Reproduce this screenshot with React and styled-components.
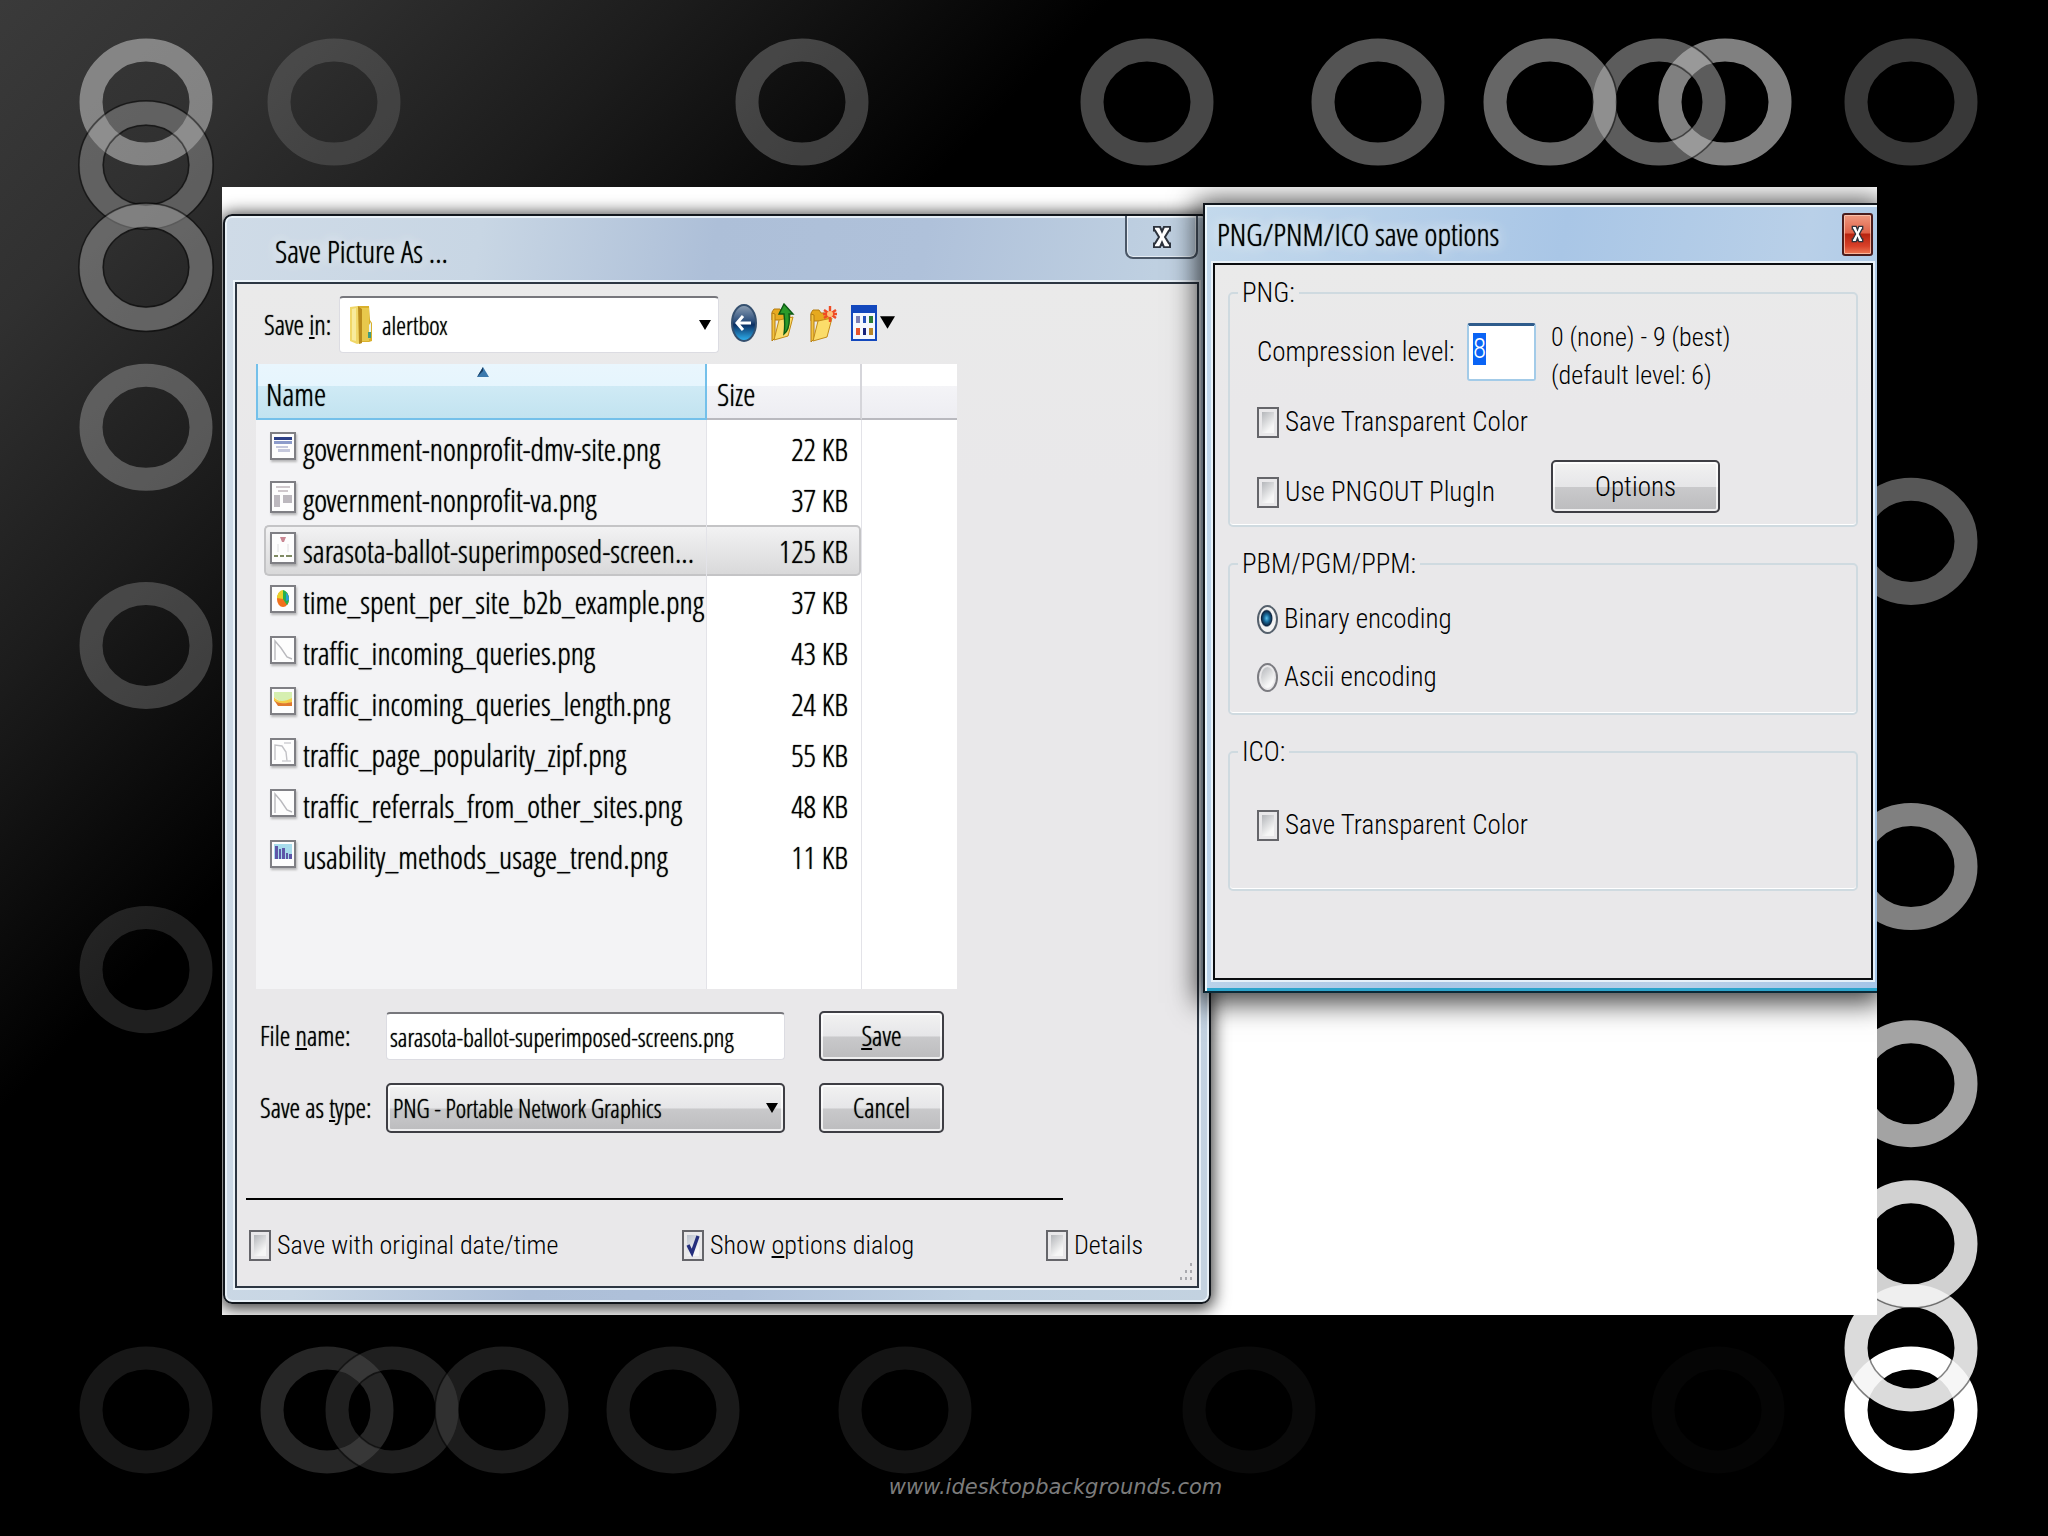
import React, { useEffect, useRef } from 'react';
import styled, { createGlobalStyle, css } from 'styled-components';

const segoe = '"Open Sans Condensed Light", "Roboto Condensed", "Open Sans", sans-serif';
const msSans = '"Roboto Condensed", Roboto, "Liberation Sans", sans-serif';

const GlobalStyle = createGlobalStyle`
    * {
        box-sizing: border-box;
    }
    body {
        margin: 0;
        background-color: #000;
    }
    button, input, select {
        font: inherit;
        color: inherit;
        text-shadow: inherit;
        margin: 0;
    }
`;

const Desktop = styled.div`
    position: relative;
    min-height: 100vh;
    padding: 187px 171px 0 222px;
    background: linear-gradient(135deg, #3a3a3a 0%, #303030 9%, #1c1c1c 19%, #000 31%);
    color: #000;
`;
const RingLayer = styled.svg`
    position: absolute;
    top: 0;
    left: 0;
    width: 100%;
    height: 100%;
`;
const Stage = styled.main`
    position: relative;
    display: flex;
    align-items: flex-start;
    padding: 27px 0 11px 1px;
    background-color: #fff;
    overflow: hidden;
`;
const Credit = styled.footer`
    position: relative;
    height: 222px;
    padding: 158px 0 0 12px;
    text-align: center;
    font-family: "DejaVu Sans", sans-serif;
    font-style: italic;
    font-size: 21px;
    line-height: 28px;
    color: #7c7c7c;
`;

const Window = styled.section`
    min-width: 0;
    border: 2px solid #11161c;
    ${(props) =>
        props.$front
            ? css`
                flex: 674 674 674px;
                margin: -11px 0 0 -8px;
                padding: 0 4px 11px 8px;
                border-right: 0;
                border-bottom-color: #0a2a38;
                background: linear-gradient(100deg, #c3d9ec 0%, #a9c6e6 45%, #b9d0e8 75%, #a4c5e8 100%);
                box-shadow: inset 2px 2px 0 #eef7fc, inset 0 -3px 0 #2ba3cb, 0 4px 26px 6px rgba(0, 0, 0, 0.75);
                z-index: 1;
            `
            : css`
                flex: 988 988 988px;
                padding: 0 10px 14px;
                border-radius: 9px;
                background: linear-gradient(100deg, #cfdbe7 0%, #c8d6e4 22%, #adbfd8 42%, #afc1da 60%, #bfd0e1 80%, #c3d2e0 100%);
                box-shadow: inset 0 0 0 2px rgba(240, 247, 252, 0.8), 0 2px 16px 3px rgba(0, 0, 0, 0.75);
            `};
`;
const TitleBar = styled.header`
    display: flex;
    justify-content: space-between;
    align-items: ${(props) => (props.$front ? 'center' : 'flex-start')};
    height: ${(props) => (props.$front ? '58px' : '66px')};
    padding-left: ${(props) => (props.$front ? '4px' : '40px')};
`;
const Title = styled.h1`
    margin: 0;
    font-family: ${segoe};
    font-size: 31px;
    font-weight: 400;
    line-height: ${(props) => (props.$front ? '60px' : '70px')};
    text-shadow: 0 0 1px #000, 0 0 12px #fff, 0 0 20px rgba(255, 255, 255, 0.8);
    white-space: nowrap;
`;
const CloseTab = styled.button`
    display: flex;
    align-items: center;
    justify-content: center;
    width: 73px;
    height: 43px;
    margin-right: 1px;
    padding: 0;
    border: 2px solid #4a5767;
    border-top: 0;
    border-radius: 0 0 8px 8px;
    background: transparent;
    box-shadow: inset 0 0 0 1px rgba(255, 255, 255, 0.6);
`;
const CloseRed = styled.button`
    display: flex;
    align-items: center;
    justify-content: center;
    width: 31px;
    height: 43px;
    padding: 0;
    border: 2px solid #4a1c1c;
    border-radius: 3px;
    background: linear-gradient(#ef9a80 0%, #e0634a 45%, #b82410 50%, #d8412a 80%, #ee7a55 100%);
    box-shadow: inset 0 0 0 1px rgba(255, 210, 190, 0.7);
`;
const Client = styled.div`
    position: relative;
    border: 2px solid ${(props) => (props.$front ? '#0b0d10' : '#2c3642')};
    background: linear-gradient(#eaeaea 0%, #e9e8ea 20%, #e9e8ea 100%);
    box-shadow: 0 0 0 2px rgba(240, 247, 252, 0.85);
    line-height: 36px;
    ${(props) =>
        props.$front
            ? css`
                min-height: 717px;
                padding: 0 13px;
                font-family: ${msSans};
                font-size: 27px;
                font-weight: 300;
            `
            : css`
                font-family: ${segoe};
                font-size: 27px;
                text-shadow: 0 0 1px #000;
            `};
`;

const LookIn = styled.div`
    display: flex;
    align-items: center;
    padding: 12px 0 11px 27px;
`;
const LookInLabel = styled.label`
    width: 75px;
`;
const Combo = styled.div`
    position: relative;
    width: ${(props) => (props.$raised ? '100%' : '380px')};
    svg {
        position: absolute;
        top: 50%;
        transform: translateY(-50%);
        pointer-events: none;
    }
    svg:last-child {
        right: ${(props) => (props.$raised ? '7px' : '8px')};
    }
    svg:first-child:not(:last-child) {
        left: 10px;
    }
`;
const raisedFace = css`
    border: 2px solid #3e3e44;
    border-radius: 5px;
    background: linear-gradient(#f2f2f2 0%, #e6e6e8 50%, #c9c9cb 52%, #bcbcbe 100%);
    box-shadow: inset 0 0 0 2px rgba(255, 255, 255, 0.75);
`;
const Select = styled.select`
    display: block;
    width: 100%;
    appearance: none;
    font-size: 25px;
    ${(props) =>
        props.$raised
            ? css`
                height: 50px;
                padding: 0 28px 0 5px;
                ${raisedFace}
            `
            : css`
                height: 57px;
                padding: 0 28px 0 42px;
                border: 1px solid #dcdce2;
                border-top: 2px solid #77777c;
                border-radius: 4px;
                background-color: #fff;
            `};
`;
const Tools = styled.div`
    display: flex;
    align-items: center;
    column-gap: 14px;
    margin-left: 12px;
    padding-bottom: 4px;
`;
const ToolButton = styled.button`
    display: flex;
    align-items: center;
    column-gap: 3px;
    padding: 0;
    border: 0;
    background: none;
`;

const FileTable = styled.table`
    width: 701px;
    margin-left: 19px;
    table-layout: fixed;
    border-collapse: separate;
    border-spacing: 0;
    background-color: #fff;
    font-size: 31px;
    th {
        position: relative;
        height: 56px;
        padding: 6px 10px 0;
        font-weight: 400;
        text-align: left;
        background: linear-gradient(#fff 0%, #fff 40%, #f4f4f7 41%, #ededf2 100%);
        border-right: 2px solid #d5d5da;
        border-bottom: 2px solid #b9b9bf;
    }
    th:first-child {
        padding-left: 8px;
        background: linear-gradient(#e9f6fd 0%, #e6f5fd 40%, #cfeaf5 41%, #c2e3f0 100%);
        border: 2px solid #74c0ea;
        border-top: 0;
    }
    th:last-child {
        border-right: 0;
    }
    td {
        height: 51px;
        padding: 0;
        border-right: 1px solid #e3e3e8;
    }
    td:first-child {
        padding-left: 8px;
        background-color: #f3f3f5;
    }
    td:last-child {
        border-right: 0;
    }
`;
const SortMark = styled.svg`
    position: absolute;
    top: 3px;
    left: 49%;
`;
const Spacer = styled.tr`
    td {
        height: ${(props) => (props.$tail ? '107px' : '3px')};
    }
`;
const Cell = styled.div`
    display: flex;
    align-items: center;
    height: 51px;
    padding-left: 6px;
    column-gap: 7px;
    white-space: nowrap;
    ${(props) =>
        props.$size &&
        css`
            justify-content: flex-end;
            padding: 0 13px 0 0;
        `};
    ${(props) =>
        props.$selected &&
        css`
            background: linear-gradient(#f2f2f3, #d9d9da);
            border-top: 2px solid #c4c4c6;
            border-bottom: 2px solid #c4c4c6;
            border-${props.$size ? 'right' : 'left'}: 2px solid #c4c4c6;
            border-radius: ${props.$size ? '0 5px 5px 0' : '5px 0 0 5px'};
            padding-${props.$size ? 'right: 11px' : 'left: 4px'};
        `};
`;
const Thumb = styled.svg`
    flex: none;
    filter: drop-shadow(1px 2px 1px rgba(0, 0, 0, 0.25));
    margin-bottom: 6px;
`;

const FileForm = styled.div`
    display: grid;
    grid-template-columns: 126px minmax(0, 399px) 125px;
    align-items: center;
    row-gap: 22px;
    margin: 22px 0 65px;
    padding-left: 23px;
    button {
        margin-left: 34px;
        width: 125px;
    }
`;
const TextBox = styled.input`
    width: 100%;
    height: 48px;
    padding: 0 3px;
    border: 1px solid #dcdce2;
    border-top: 2px solid #77777c;
    border-radius: 4px;
    background-color: #fff;
    font-size: 25px;
`;
const Button = styled.button`
    height: 50px;
    padding: 0;
    ${raisedFace}
`;
const Rule = styled.hr`
    width: 817px;
    margin: 0 0 0 9px;
    border: 0;
    border-top: 2px solid #000;
`;
const FooterChecks = styled.div`
    display: grid;
    grid-template-columns: 433fr 364fr 151fr;
    padding: 27px 0 23px 12px;
    font-family: ${msSans};
    font-size: 26px;
    font-weight: 300;
    text-shadow: none;
`;
const Grip = styled.svg`
    position: absolute;
    right: 4px;
    bottom: 4px;
`;

const Choice = styled.label`
    display: flex;
    align-items: center;
    column-gap: 6px;
    height: 36px;
    white-space: nowrap;
`;
const CheckBox = styled.input`
    appearance: none;
    flex: none;
    width: 22px;
    height: 31px;
    border: 2px solid #65656a;
    background: linear-gradient(135deg, #b4b6ba, #f6f6f6 75%) content-box #f4f4f4;
    padding: 3px;
    &:checked {
        background:
            url("data:image/svg+xml,%3Csvg xmlns='http://www.w3.org/2000/svg' viewBox='0 0 18 27' preserveAspectRatio='none'%3E%3Cpath d='M4 13l4 8 6-17' fill='none' stroke='%23252f7d' stroke-width='3.4'/%3E%3C/svg%3E") center / 100% 100% no-repeat,
            linear-gradient(135deg, #b9c0cc, #f6f6f6 75%) content-box #f4f4f4;
    }
`;
const Radio = styled.input`
    appearance: none;
    flex: none;
    width: 21px;
    height: 29px;
    border: 2px solid #7b7b80;
    border-radius: 50%;
    background: linear-gradient(135deg, #b4b6ba, #f8f8f8 75%) content-box #f2f2f2;
    padding: 2px;
    &:checked {
        border-color: #55606c;
        background: radial-gradient(ellipse 7px 10px at 45% 45%, #5cc0ea 0%, #1b6f9f 35%, #0c2440 75%, #f2f2f2 90%);
    }
`;
const Group = styled.fieldset`
    min-width: 0;
    margin: ${(props) => props.$top} 0 0;
    padding: 0 13px ${(props) => props.$bottom} 27px;
    border: 2px solid #cfdae0;
    border-radius: 5px;
    box-shadow: inset 0 -1px 0 #fff;
    legend {
        margin-left: -19px;
        padding: 0 4px;
        line-height: 34px;
    }
`;
const LevelRow = styled.div`
    display: flex;
    align-items: center;
    height: 76px;
    margin: 4px 0 14px;
    line-height: 38px;
    label {
        width: 210px;
    }
    p {
        margin: 0;
        padding-top: 8px;
        font-size: 26px;
    }
`;
const LevelBox = styled.input`
    width: 69px;
    height: 58px;
    margin-right: 15px;
    padding: 0 4px 8px;
    border: 2px solid #a3cbe8;
    border-top: 3px solid #2f5c8c;
    border-radius: 3px;
    background-color: #fff;
    outline: 0;
    &::selection {
        background-color: #0a64f5;
        color: #fff;
    }
`;
const PluginRow = styled.div`
    display: flex;
    align-items: flex-end;
    margin-top: 20px;
    label {
        width: 294px;
        height: 42px;
    }
    button {
        width: 169px;
        height: 53px;
    }
`;
const Stack = styled.div`
    display: flex;
    flex-direction: column;
    row-gap: 22px;
    padding-top: ${(props) => props.$top};
`;

// [cx, cy, opacity, outlined]
const rings = [
    [146, 102, 0.4], [146, 165, 0.28, true], [146, 267, 0.31, true], [146, 427, 0.26], [146, 645, 0.2],
    [146, 969, 0.12], [146, 1409, 0.09],
    [334, 102, 0.13], [802, 102, 0.22], [1147, 102, 0.28], [1378, 102, 0.33], [1725, 102, 0.5],
    [1659, 102, 0.36, true], [1550, 102, 0.4, true], [1911, 102, 0.22],
    [1911, 541, 0.34], [1911, 866, 0.5], [1911, 1083, 0.64], [1911, 1409, 1], [1911, 1347, 0.86, true],
    [1911, 1243, 0.82, true],
    [327, 1409, 0.15], [392, 1409, 0.12, true], [502, 1409, 0.11, true], [673, 1409, 0.1], [905, 1409, 0.08],
    [1249, 1409, 0.04], [1718, 1409, 0.02],
];

const files = [
    { name: 'government-nonprofit-dmv-site.png', size: '22 KB', thumb: 'page' },
    { name: 'government-nonprofit-va.png', size: '37 KB', thumb: 'columns', tall: true },
    { name: 'sarasota-ballot-superimposed-screen...', size: '125 KB', thumb: 'ballot', tall: true, selected: true },
    { name: 'time_spent_per_site_b2b_example.png', size: '37 KB', thumb: 'pie' },
    { name: 'traffic_incoming_queries.png', size: '43 KB', thumb: 'curve' },
    { name: 'traffic_incoming_queries_length.png', size: '24 KB', thumb: 'area' },
    { name: 'traffic_page_popularity_zipf.png', size: '55 KB', thumb: 'zipf' },
    { name: 'traffic_referrals_from_other_sites.png', size: '48 KB', thumb: 'curve' },
    { name: 'usability_methods_usage_trend.png', size: '11 KB', thumb: 'bars' },
];

const thumbs = {
    page: (
        <>
            <path d="M4 5h18v3H4z" fill="#2c3f86" />
            <path d="M4 9h18v3H4z" fill="#8d9ccb" />
            <path d="M6 14h12v2H6zM8 17h12v3H8z" fill="#c5c8dc" />
        </>
    ),
    columns: (
        <>
            <path d="M6 5h14v2H6zM8 9h10v2H8z" fill="#cfc8cc" />
            <path d="M4 14h6v12H4zM13 14h9v8h-9z" fill="#bcb8be" />
        </>
    ),
    ballot: (
        <>
            <path d="M10 5h6l-2 5h-2z" fill="#c98793" />
            <path d="M8 12v8M18 12v8" stroke="#dedee0" strokeWidth="1" />
            <path d="M4 23h4v2H4zM10 23h4v2h-4zM16 23h6v2h-6z" fill="#7f8a63" />
        </>
    ),
    pie: (
        <>
            <ellipse cx="13" cy="14" rx="6" ry="8" fill="#f2711c" />
            <path d="M13 14V5c4 1 6 5 6 9 0 3-1 5-2 6z" fill="#25b24a" />
            <path d="M13 14V5c-3 0-6 4-6 8z" fill="#e8d12a" />
            <path d="M16 8c2 1 3 4 3 7l-3 1z" fill="#2a9fd8" />
        </>
    ),
    curve: <path d="M5 24V5l6 7 6 9 5 2" fill="none" stroke="#b9b9bd" strokeWidth="1.4" />,
    area: (
        <>
            <path d="M4 5h18v8c-7 3-13 2-18-3z" fill="#d6efb0" />
            <path d="M4 10c4 5 10 5 18 1v4c-8 3-14 2-18-1z" fill="#f4cf4a" />
            <path d="M4 13c4 4 10 4 18 2v4H8z" fill="#e0792d" />
        </>
    ),
    zipf: (
        <>
            <path d="M5 22V7l7 1 4 6 1 9" fill="none" stroke="#c2c2c6" strokeWidth="1.4" />
            <path d="M14 5h7M12 23h9" stroke="#cfcfd3" strokeWidth="1.6" />
        </>
    ),
    bars: (
        <>
            <path d="M4 4h18v15H4z" fill="#a8dcec" />
            <path d="M5 6h3v13H5zM9 9h2v10H9zM12 8h3v11h-3zM16 13h2v6h-2zM19 14h3v5h-3z" fill="#5e56a8" />
        </>
    ),
};

const FileIcon = ({ kind, tall }) => {
    const h = tall ? 32 : 28;
    return (
        <Thumb width="26" height={h} viewBox={`0 0 26 ${h}`}>
            <rect x="1" y="1" width="24" height={h - 2} fill="#fdfdfd" stroke="#7f7f84" strokeWidth="2" />
            {thumbs[kind]}
        </Thumb>
    );
};

const Caret = ({ w = 12, h = 10 }) => (
    <svg width={w} height={h} viewBox="0 0 12 10">
        <path d="M0 0h12L6 10z" fill="#000" />
    </svg>
);

const Folder = () => (
    <svg width="24" height="40" viewBox="0 0 24 40">
        <path d="M8 1h12l1 14 2 3v18l-3 1H8z" fill="#d9b02c" />
        <path d="M12 3h8v33h-8z" fill="#e8c84c" />
        <path d="M20 20l2-3v13l-2 4z" fill="#e9f4f4" />
        <path d="M19 27h3v6h-3z" fill="#3f9c82" />
        <path d="M1 2l8-1 4 3v34l-5 1-7-3z" fill="#f0d768" />
        <path d="M9 1l4 3v34l-3 1z" fill="#b88a1c" />
        <path d="M3 4l4-1v33l-4-1z" fill="#f8eb9c" />
    </svg>
);

const BackIcon = () => (
    <svg width="26" height="40" viewBox="0 0 26 40">
        <defs>
            <linearGradient id="orb" x1="0" y1="0" x2="0" y2="1">
                <stop offset="0" stopColor="#8ea0b4" />
                <stop offset="0.45" stopColor="#2d4f7c" />
                <stop offset="0.55" stopColor="#0b2f63" />
                <stop offset="1" stopColor="#2fb4f2" />
            </linearGradient>
        </defs>
        <ellipse cx="13" cy="20" rx="12" ry="18" fill="url(#orb)" stroke="#35506f" strokeWidth="2" />
        <path d="M20 20H7M12 13l-6 7 6 7" fill="none" stroke="#fff" strokeWidth="3" />
    </svg>
);

const OpenFolder = () => (
    <>
        <path d="M1 9l2-3h6l2 3h8v8H1z" fill="#e6a91f" stroke="#b57d12" />
        <path d="M1 38V10l3 1v24z" fill="#f3c33e" stroke="#b57d12" />
        <path d="M3 37l5-20 14-3-5 19z" fill="#fbdc6a" stroke="#c28a17" />
    </>
);

const UpIcon = () => (
    <svg width="25" height="40" viewBox="0 0 25 40">
        <OpenFolder />
        <path d="M13 1l9 10h-4c1 9 0 16-5 20 1-7 1-12 0-20H8z" fill="#2a9a2a" stroke="#0c5a14" strokeWidth="1.4" />
    </svg>
);

const NewFolderIcon = () => (
    <svg width="27" height="38" viewBox="0 0 27 38">
        <OpenFolder />
        <path d="M20 2v16M14 6l12 8M26 6l-12 8M13 10h14" stroke="#ef4b24" strokeWidth="2.4" />
        <circle cx="20" cy="10" r="3" fill="#ffc27a" />
    </svg>
);

const ViewIcon = () => (
    <svg width="26" height="36" viewBox="0 0 26 36">
        <rect x="1" y="1" width="24" height="34" fill="#f4f8fe" stroke="#1348bd" strokeWidth="2" />
        <path d="M1 1h24v7H1z" fill="#1348bd" />
        <path d="M5 11h4v7H5z" fill="#7d7fb5" />
        <path d="M12 11h3v7h-3z" fill="#2451b8" />
        <path d="M18 11h4v7h-4z" fill="#2c7a35" />
        <path d="M5 23h4v7H5z" fill="#e8552d" />
        <path d="M12 23h3v7h-3z" fill="#16237c" />
        <path d="M18 23h4v7h-4z" fill="#b8862b" />
    </svg>
);

const CloseMark = ({ w, h }) => (
    <svg width={w} height={h} viewBox="0 0 20 26" preserveAspectRatio="none">
        <path
            d="M2 2h6l2 5 2-5h6v4h-1l-4 7 4 7h1v4h-6l-2-5-2 5H2v-4h1l4-7-4-7H2z"
            fill="#fff"
            stroke="#2d333d"
            strokeWidth="2"
        />
    </svg>
);

const Rings = () => (
    <RingLayer viewBox="0 0 2048 1536" preserveAspectRatio="none" aria-hidden="true">
        {rings.map(([cx, cy, opacity, outlined]) => (
            <g key={`${cx}-${cy}`} fill="none">
                {outlined && (
                    <>
                        <ellipse cx={cx} cy={cy} rx="55" ry="52" stroke="#000" strokeOpacity="0.25" strokeWidth="23" />
                        <ellipse cx={cx} cy={cy} rx="67" ry="64" stroke="#000" strokeOpacity="0.5" strokeWidth="2" />
                        <ellipse cx={cx} cy={cy} rx="43" ry="40" stroke="#000" strokeOpacity="0.5" strokeWidth="2" />
                    </>
                )}
                <ellipse cx={cx} cy={cy} rx="55" ry="52" stroke="#fff" strokeOpacity={opacity} strokeWidth="23" />
            </g>
        ))}
    </RingLayer>
);

const SaveDialog = () => (
    <Window aria-label="Save Picture As">
        <TitleBar>
            <Title>Save Picture As ...</Title>
            <CloseTab type="button" aria-label="Close">
                <CloseMark w={20} h={24} />
            </CloseTab>
        </TitleBar>
        <Client>
            <LookIn>
                <LookInLabel htmlFor="look-in">Save <u>i</u>n:</LookInLabel>
                <Combo>
                    <Folder />
                    <Select id="look-in" defaultValue="alertbox">
                        <option>alertbox</option>
                    </Select>
                    <Caret />
                </Combo>
                <Tools>
                    <ToolButton type="button" aria-label="Back"><BackIcon /></ToolButton>
                    <ToolButton type="button" aria-label="Up one level"><UpIcon /></ToolButton>
                    <ToolButton type="button" aria-label="New folder"><NewFolderIcon /></ToolButton>
                    <ToolButton type="button" aria-label="Views">
                        <ViewIcon />
                        <Caret w={15} h={13} />
                    </ToolButton>
                </Tools>
            </LookIn>
            <FileTable>
                <colgroup>
                    <col width="451" />
                    <col width="155" />
                    <col />
                </colgroup>
                <thead>
                    <tr>
                        <th>
                            Name
                            <SortMark width="12" height="10" viewBox="0 0 12 10">
                                <path d="M0 10L6 0l6 10z" fill="#3b79ad" />
                                <path d="M0 10L6 0v4z" fill="#173a5e" />
                            </SortMark>
                        </th>
                        <th>Size</th>
                        <th aria-hidden="true" />
                    </tr>
                </thead>
                <tbody>
                    <Spacer><td /><td /><td /></Spacer>
                    {files.map((file) => (
                        <tr key={file.name}>
                            <td>
                                <Cell $selected={file.selected}>
                                    <FileIcon kind={file.thumb} tall={file.tall} />
                                    {file.name}
                                </Cell>
                            </td>
                            <td>
                                <Cell $size $selected={file.selected}>{file.size}</Cell>
                            </td>
                            <td />
                        </tr>
                    ))}
                    <Spacer $tail><td /><td /><td /></Spacer>
                </tbody>
            </FileTable>
            <FileForm>
                <label htmlFor="file-name">File <u>n</u>ame:</label>
                <TextBox id="file-name" type="text" defaultValue="sarasota-ballot-superimposed-screens.png" />
                <Button type="button"><u>S</u>ave</Button>
                <label htmlFor="file-type">Save as <u>t</u>ype:</label>
                <Combo $raised>
                    <Select id="file-type" $raised defaultValue="PNG - Portable Network Graphics">
                        <option>PNG - Portable Network Graphics</option>
                    </Select>
                    <Caret />
                </Combo>
                <Button type="button">Cancel</Button>
            </FileForm>
            <Rule />
            <FooterChecks>
                <Choice><CheckBox type="checkbox" />Save with original date/time</Choice>
                <Choice>
                    <CheckBox type="checkbox" defaultChecked />
                    <span>Show <u>o</u>ptions dialog</span>
                </Choice>
                <Choice><CheckBox type="checkbox" />Details</Choice>
            </FooterChecks>
            <Grip width="14" height="20" viewBox="0 0 14 20" aria-hidden="true">
                <path d="M11 1h2v3h-2zM11 8h2v3h-2zM6 8h2v3H6zM11 15h2v3h-2zM6 15h2v3H6zM1 15h2v3H1z" fill="#a9a9ae" />
            </Grip>
        </Client>
    </Window>
);

const OptionsDialog = () => {
    const level = useRef(null);

    useEffect(() => {
        level.current.focus();
        level.current.select();
    }, []);

    return (
        <Window $front aria-label="PNG/PNM/ICO save options">
            <TitleBar $front>
                <Title $front>PNG/PNM/ICO save options</Title>
                <CloseRed type="button" aria-label="Close">
                    <CloseMark w={13} h={18} />
                </CloseRed>
            </TitleBar>
            <Client $front>
                <Group $top="11px" $bottom="12px">
                    <legend>PNG:</legend>
                    <LevelRow>
                        <label htmlFor="level">Compression level:</label>
                        <LevelBox id="level" ref={level} type="text" defaultValue="8" />
                        <p>
                            0 (none) - 9 (best)<br />
                            (default level: 6)
                        </p>
                    </LevelRow>
                    <Choice><CheckBox type="checkbox" />Save Transparent Color</Choice>
                    <PluginRow>
                        <Choice><CheckBox type="checkbox" />Use PNGOUT PlugIn</Choice>
                        <Button type="button">Options</Button>
                    </PluginRow>
                </Group>
                <Group $top="20px" $bottom="18px">
                    <legend>PBM/PGM/PPM:</legend>
                    <Stack $top="20px">
                        <Choice><Radio type="radio" name="encoding" defaultChecked />Binary encoding</Choice>
                        <Choice><Radio type="radio" name="encoding" />Ascii encoding</Choice>
                    </Stack>
                </Group>
                <Group $top="20px" $bottom="46px">
                    <legend>ICO:</legend>
                    <Stack $top="38px">
                        <Choice><CheckBox type="checkbox" />Save Transparent Color</Choice>
                    </Stack>
                </Group>
            </Client>
        </Window>
    );
};

const App = () => {
    return (
        <Desktop>
            <GlobalStyle />
            <Rings />
            <Stage>
                <SaveDialog />
                <OptionsDialog />
            </Stage>
            <Credit>www.idesktopbackgrounds.com</Credit>
        </Desktop>
    );
};

export default App;
